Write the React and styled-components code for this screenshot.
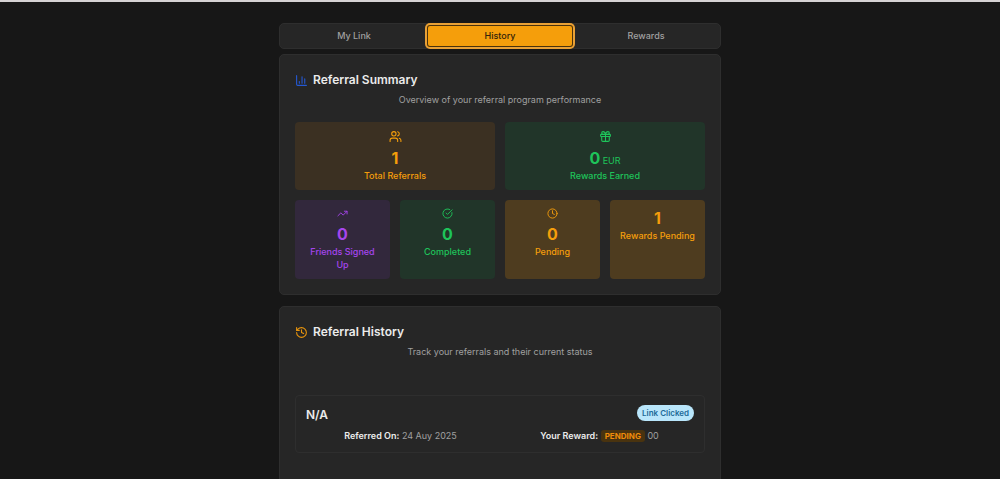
import styled, { createGlobalStyle } from 'styled-components';
import {
  ChartColumn,
  CircleCheckBig,
  Clock,
  Gift,
  History,
  TrendingUp,
  Users,
} from 'lucide-react';
import { useState } from 'react';

const tabs = ['My Link', 'History', 'Rewards'];

const totals = [
  { icon: Users, value: '1', label: 'Total Referrals', tone: 'amber' },
  { icon: Gift, value: '0', unit: 'EUR', label: 'Rewards Earned', tone: 'green' },
];

const breakdown = [
  { icon: TrendingUp, value: '0', label: 'Friends Signed Up', tone: 'purple' },
  { icon: CircleCheckBig, value: '0', label: 'Completed', tone: 'green' },
  { icon: Clock, value: '0', label: 'Pending', tone: 'gold' },
  { value: '1', label: 'Rewards Pending', tone: 'gold' },
];

const tones = {
  amber: { color: '#f59e0b', background: '#3b3022' },
  gold: { color: '#f59e0b', background: '#4e3c1f' },
  green: { color: '#1ec45a', background: '#213529' },
  purple: { color: '#a645ee', background: '#32283c' },
};

function Stat({ icon: Icon, value, unit, label, tone, iconSize }) {
  return (
    <Tile $tone={tone}>
      {Icon && <Icon size={iconSize} aria-hidden="true" />}
      <Value>
        {value}
        {unit && <Unit> {unit}</Unit>}
      </Value>
      <Label>{label}</Label>
    </Tile>
  );
}

function App() {
  const [active, setActive] = useState('History');

  return (
    <Page>
      <GlobalStyle />
      <Content>
        <TabList role="tablist">
          {tabs.map((tab) => (
            <Tab
              key={tab}
              type="button"
              role="tab"
              aria-selected={tab === active}
              $active={tab === active}
              onClick={() => setActive(tab)}
            >
              {tab}
            </Tab>
          ))}
        </TabList>

        <Card>
          <Title $color="#2459d6">
            <ChartColumn size={13} aria-hidden="true" />
            Referral Summary
          </Title>
          <Subtitle>Overview of your referral program performance</Subtitle>
          <Stats>
            <StatRow $columns={2}>
              {totals.map((stat) => <Stat key={stat.label} iconSize={13} {...stat} />)}
            </StatRow>
            <StatRow $columns={4}>
              {breakdown.map((stat) => <Stat key={stat.label} iconSize={11} {...stat} />)}
            </StatRow>
          </Stats>
        </Card>

        <Card>
          <Title $color="#e8940c">
            <History size={13} aria-hidden="true" />
            Referral History
          </Title>
          <Subtitle>Track your referrals and their current status</Subtitle>
          <Referrals>
            <Referral>
              <ReferralHead>
                <Name>N/A</Name>
                <Status>Link Clicked</Status>
              </ReferralHead>
              <Details>
                <Detail><strong>Referred On:</strong> 24 Auy 2025</Detail>
                <Detail>
                  <strong>Your Reward:</strong> <Pending>PENDING</Pending> 00
                </Detail>
              </Details>
            </Referral>
          </Referrals>
        </Card>
      </Content>
    </Page>
  );
}

export default App;

const GlobalStyle = createGlobalStyle`
  * {
    box-sizing: border-box;
  }

  body {
    margin: 0;
    background: #171717;
    font-family: Inter, 'Liberation Sans', sans-serif;
  }
`

const Page = styled.div`
  min-height: 100vh;
  padding: 21px 16px;
  border-top: 2px solid #d6d3d4;
  color: #ebebeb;
`

const Content = styled.main`
  max-width: 442px;
  margin: 0 auto;
`

const TabList = styled.div`
  display: grid;
  grid-template-columns: repeat(3, 1fr);
  margin-bottom: 5px;
  padding: 1px;
  border: 1px solid #2e2e2e;
  border-radius: 5px;
  background: #262626;
`

const Tab = styled.button`
  height: 22px;
  padding: 0;
  border: 0;
  border-radius: 3px;
  background: ${(props) => (props.$active ? '#f59e0b' : 'transparent')};
  box-shadow: ${(props) => (props.$active ? '0 0 0 2px #e9a035, inset 0 0 0 1px #4a320c' : 'none')};
  color: ${(props) => (props.$active ? '#33230a' : '#a0a0a0')};
  font-family: inherit;
  font-size: 9px;
  font-weight: 500;
  line-height: 22px;
`

const Card = styled.section`
  margin-bottom: 11px;
  padding: 15px;
  border: 1px solid #2e2e2e;
  border-radius: 5px;
  background: #262626;
`

const Title = styled.h2`
  display: flex;
  align-items: center;
  gap: 5px;
  margin: 0;
  font-size: 12px;
  font-weight: 600;
  line-height: 20px;

  svg {
    color: ${(props) => props.$color};
  }
`

const Subtitle = styled.p`
  margin: 0;
  color: #a0a0a0;
  font-size: 9px;
  line-height: 20px;
  text-align: center;
`

const Stats = styled.div`
  display: grid;
  gap: 10px;
  margin-top: 12px;
`

const StatRow = styled.div`
  display: grid;
  grid-template-columns: repeat(${(props) => props.$columns}, 1fr);
  gap: 10px;
`

const Tile = styled.div`
  display: flex;
  flex-direction: column;
  align-items: center;
  padding: 8px 9px;
  border-radius: 4px;
  background: ${(props) => tones[props.$tone].background};
  color: ${(props) => tones[props.$tone].color};
  text-align: center;

  svg {
    margin-bottom: 5px;
  }
`

const Value = styled.div`
  font-size: 16px;
  font-weight: 700;
  line-height: 21px;
`

const Unit = styled.span`
  font-size: 9px;
  font-weight: 400;
  line-height: 1;
`

const Label = styled.div`
  font-size: 9px;
  font-weight: 500;
  line-height: 13px;
`

const Referrals = styled.div`
  margin: 33px 0 24px;
`

const Referral = styled.article`
  padding: 9px 10px;
  border: 1px solid #2e2e2e;
  border-radius: 4px;
`

const ReferralHead = styled.div`
  display: flex;
  align-items: flex-start;
  justify-content: space-between;
`

const Name = styled.h3`
  margin: 0;
  font-size: 12px;
  font-weight: 600;
  line-height: 20px;
`

const Status = styled.span`
  padding: 0 5px;
  border-radius: 8px;
  background: #b9e6fb;
  color: #1c6a98;
  font-size: 8px;
  font-weight: 600;
  line-height: 16px;
`

const Details = styled.div`
  display: grid;
  grid-template-columns: 1fr 1fr;
  gap: 10px;
  margin-top: 4px;
`

const Detail = styled.div`
  color: #a0a0a0;
  font-size: 9px;
  line-height: 14px;
  text-align: center;

  strong {
    color: #ebebeb;
    font-weight: 600;
  }
`

const Pending = styled.span`
  padding: 1px 4px;
  border-radius: 3px;
  background: #49330f;
  color: #f08c0a;
  font-size: 8px;
  font-weight: 700;
`
